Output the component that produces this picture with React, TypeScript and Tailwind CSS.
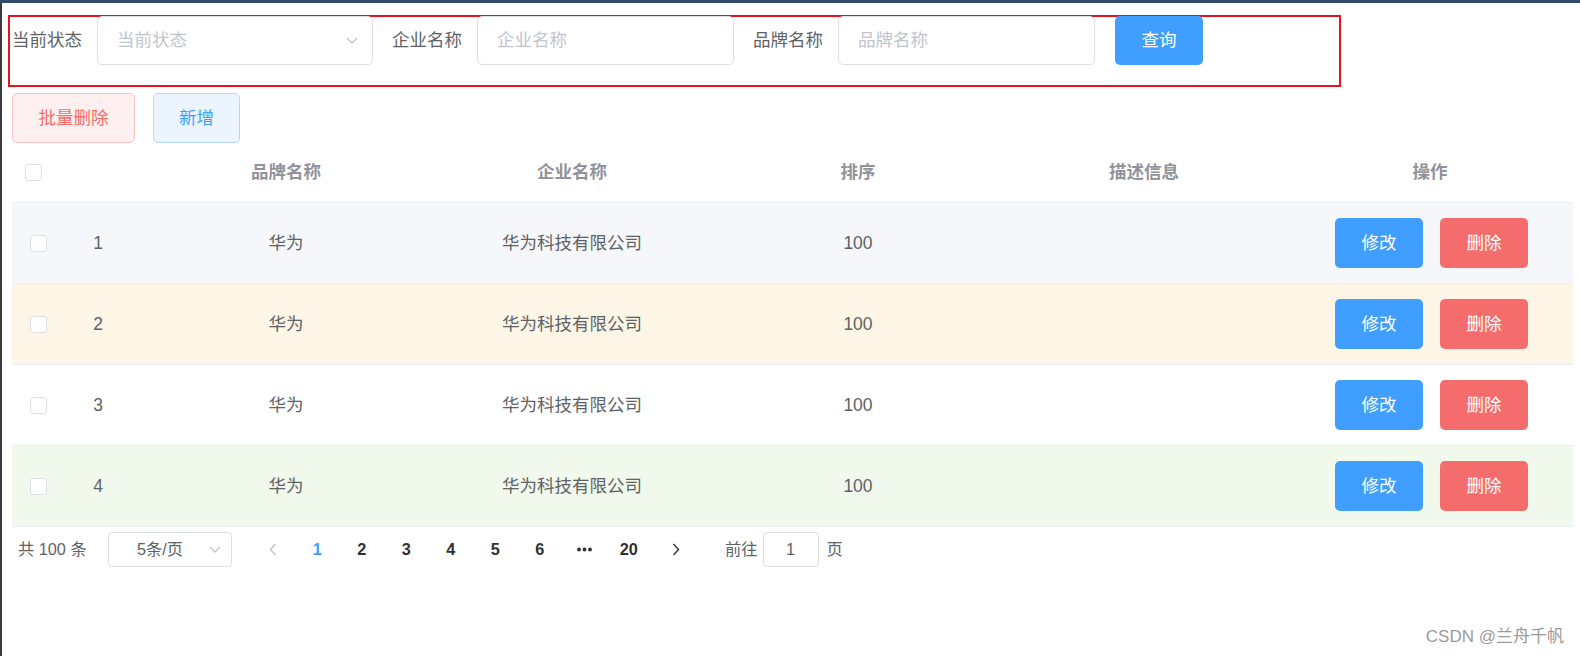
import React from "react";

const FONT = '"Liberation Sans", "Noto Sans CJK SC", sans-serif';

const Chevron = ({ className }: { className?: string }) => (
  <svg width="12" height="7" viewBox="0 0 12 7" className={className}>
    <path d="M1 1 L6 6 L11 1" fill="none" stroke="#c0c4cc" strokeWidth="1.3" />
  </svg>
);

const Checkbox = () => (
  <div className="w-[17px] h-[17px] rounded-[3px] border border-[#dcdfe6] bg-white" />
);

const rows = [
  { i: 1, bg: "bg-[#f5f7fa]" },
  { i: 2, bg: "bg-[#fdf5e6]" },
  { i: 3, bg: "bg-white" },
  { i: 4, bg: "bg-[#f0f9eb]" },
];

export default function App() {
  return (
    <div
      className="relative w-[1580px] h-[656px] bg-white overflow-hidden flex flex-col"
      style={{ fontFamily: FONT }}
    >
      <div className="h-[3px] bg-[#2f4d66] shrink-0" />
      <div className="flex flex-1">
        <div className="w-[2px] bg-[#3c3c3c] shrink-0" />
        <div className="flex-1 flex flex-col">
          {/* search form with red annotation frame */}
          <div className="mt-[12px] ml-[6px] w-[1333px] h-[72px] border-2 border-[#e5141e]">
            <div className="flex items-start pl-[2px] mt-[-1px]">
              <div className="w-[85px] h-[49px] flex items-center text-[17.5px] text-[#606266]">当前状态</div>
              <div className="w-[276px] h-[49px] rounded-[5px] border border-[#dcdfe6] flex items-center justify-between pl-[19px] pr-[14px]">
                <span className="text-[17.5px] text-[#c0c4cc]">当前状态</span>
                <Chevron />
              </div>
              <div className="ml-[19px] w-[85px] h-[49px] flex items-center text-[17.5px] text-[#606266]">企业名称</div>
              <div className="w-[257px] h-[49px] rounded-[5px] border border-[#dcdfe6] flex items-center pl-[19px]">
                <span className="text-[17.5px] text-[#c0c4cc]">企业名称</span>
              </div>
              <div className="ml-[19px] w-[85px] h-[49px] flex items-center text-[17.5px] text-[#606266]">品牌名称</div>
              <div className="w-[257px] h-[49px] rounded-[5px] border border-[#dcdfe6] flex items-center pl-[19px]">
                <span className="text-[17.5px] text-[#c0c4cc]">品牌名称</span>
              </div>
              <div className="ml-[20px] w-[88px] h-[49px] rounded-[5px] bg-[#409eff] flex items-center justify-center text-[17.5px] text-white">
                查询
              </div>
            </div>
          </div>

          {/* action buttons */}
          <div className="mt-[6px] ml-[10px] flex gap-[18px]">
            <div className="w-[123px] h-[50px] rounded-[5px] border border-[#fbc4c4] bg-[#fef0f0] flex items-center justify-center text-[17.5px] text-[#f56c6c]">
              批量删除
            </div>
            <div className="w-[87px] h-[50px] rounded-[5px] border border-[#b3d8ff] bg-[#ecf5ff] flex items-center justify-center text-[17.5px] text-[#409eff]">
              新增
            </div>
          </div>

          {/* table */}
          <div className="ml-[10px] w-[1561px]">
            <div className="grid grid-cols-[50px_81px_repeat(5,286px)] h-[60px] border-b border-[#ebeef5] items-center text-[17.5px] font-bold text-[#909399]">
              <div className="pl-[13px]"><Checkbox /></div>
              <div />
              <div className="text-center">品牌名称</div>
              <div className="text-center">企业名称</div>
              <div className="text-center">排序</div>
              <div className="text-center">描述信息</div>
              <div className="text-center">操作</div>
            </div>
            {rows.map((r) => (
              <div
                key={r.i}
                className={`grid grid-cols-[50px_81px_repeat(5,286px)] h-[81px] border-b border-[#ebeef5] items-center text-[17.5px] text-[#606266] ${r.bg}`}
              >
                <div className="pl-[18px]"><Checkbox /></div>
                <div className="flex justify-center pr-[9px]">{r.i}</div>
                <div className="text-center">华为</div>
                <div className="text-center">华为科技有限公司</div>
                <div className="text-center">100</div>
                <div />
                <div className="flex justify-center gap-[17px] pl-[3px]">
                  <div className="w-[88px] h-[50px] rounded-[5px] bg-[#409eff] flex items-center justify-center text-white">修改</div>
                  <div className="w-[88px] h-[50px] rounded-[5px] bg-[#f56c6c] flex items-center justify-center text-white">删除</div>
                </div>
              </div>
            ))}
          </div>

          {/* pagination */}
          <div className="mt-[5px] ml-[16px] h-[35px] flex items-center text-[16.25px] text-[#606266]">
            <span className="w-[90px]">共 100 条</span>
            <div className="w-[124px] h-[35px] rounded-[4px] border border-[#dcdfe6] flex items-center justify-between pl-[28px] pr-[10px]">
              <span className="text-[#606266]">5条/页</span>
              <Chevron />
            </div>
            <div className="ml-[19px] w-[44px] flex justify-center">
              <svg width="8" height="13" viewBox="0 0 8 13">
                <path d="M6.5 1 L1.5 6.5 L6.5 12" fill="none" stroke="#c0c4cc" strokeWidth="1.4" />
              </svg>
            </div>
            <div className="flex font-bold text-[#303133]">
              {["1", "2", "3", "4", "5", "6", "more", "20"].map((p) => (
                <div
                  key={p}
                  className={`w-[44.5px] flex justify-center ${p === "1" ? "text-[#409eff]" : ""}`}
                >
                  {p === "more" ? (
                    <svg width="15" height="5" viewBox="0 0 15 5" className="self-center">
                      <circle cx="2" cy="2.5" r="1.9" fill="#303133" />
                      <circle cx="7.5" cy="2.5" r="1.9" fill="#303133" />
                      <circle cx="13" cy="2.5" r="1.9" fill="#303133" />
                    </svg>
                  ) : (
                    p
                  )}
                </div>
              ))}
            </div>
            <div className="ml-[3px] w-[44px] flex justify-center">
              <svg width="8" height="13" viewBox="0 0 8 13">
                <path d="M1.5 1 L6.5 6.5 L1.5 12" fill="none" stroke="#303133" strokeWidth="1.4" />
              </svg>
            </div>
            <span className="ml-[27px]">前往</span>
            <div className="ml-[5px] w-[56px] h-[35px] rounded-[4px] border border-[#dcdfe6] flex items-center justify-center text-[#606266]">
              1
            </div>
            <span className="ml-[8px]">页</span>
          </div>
        </div>
      </div>

      {/* watermark overlay */}
      <div className="absolute right-[16px] top-[628px] text-[17px] text-[#9a9a9a] leading-none">
        CSDN @兰舟千帆
      </div>
    </div>
  );
}
